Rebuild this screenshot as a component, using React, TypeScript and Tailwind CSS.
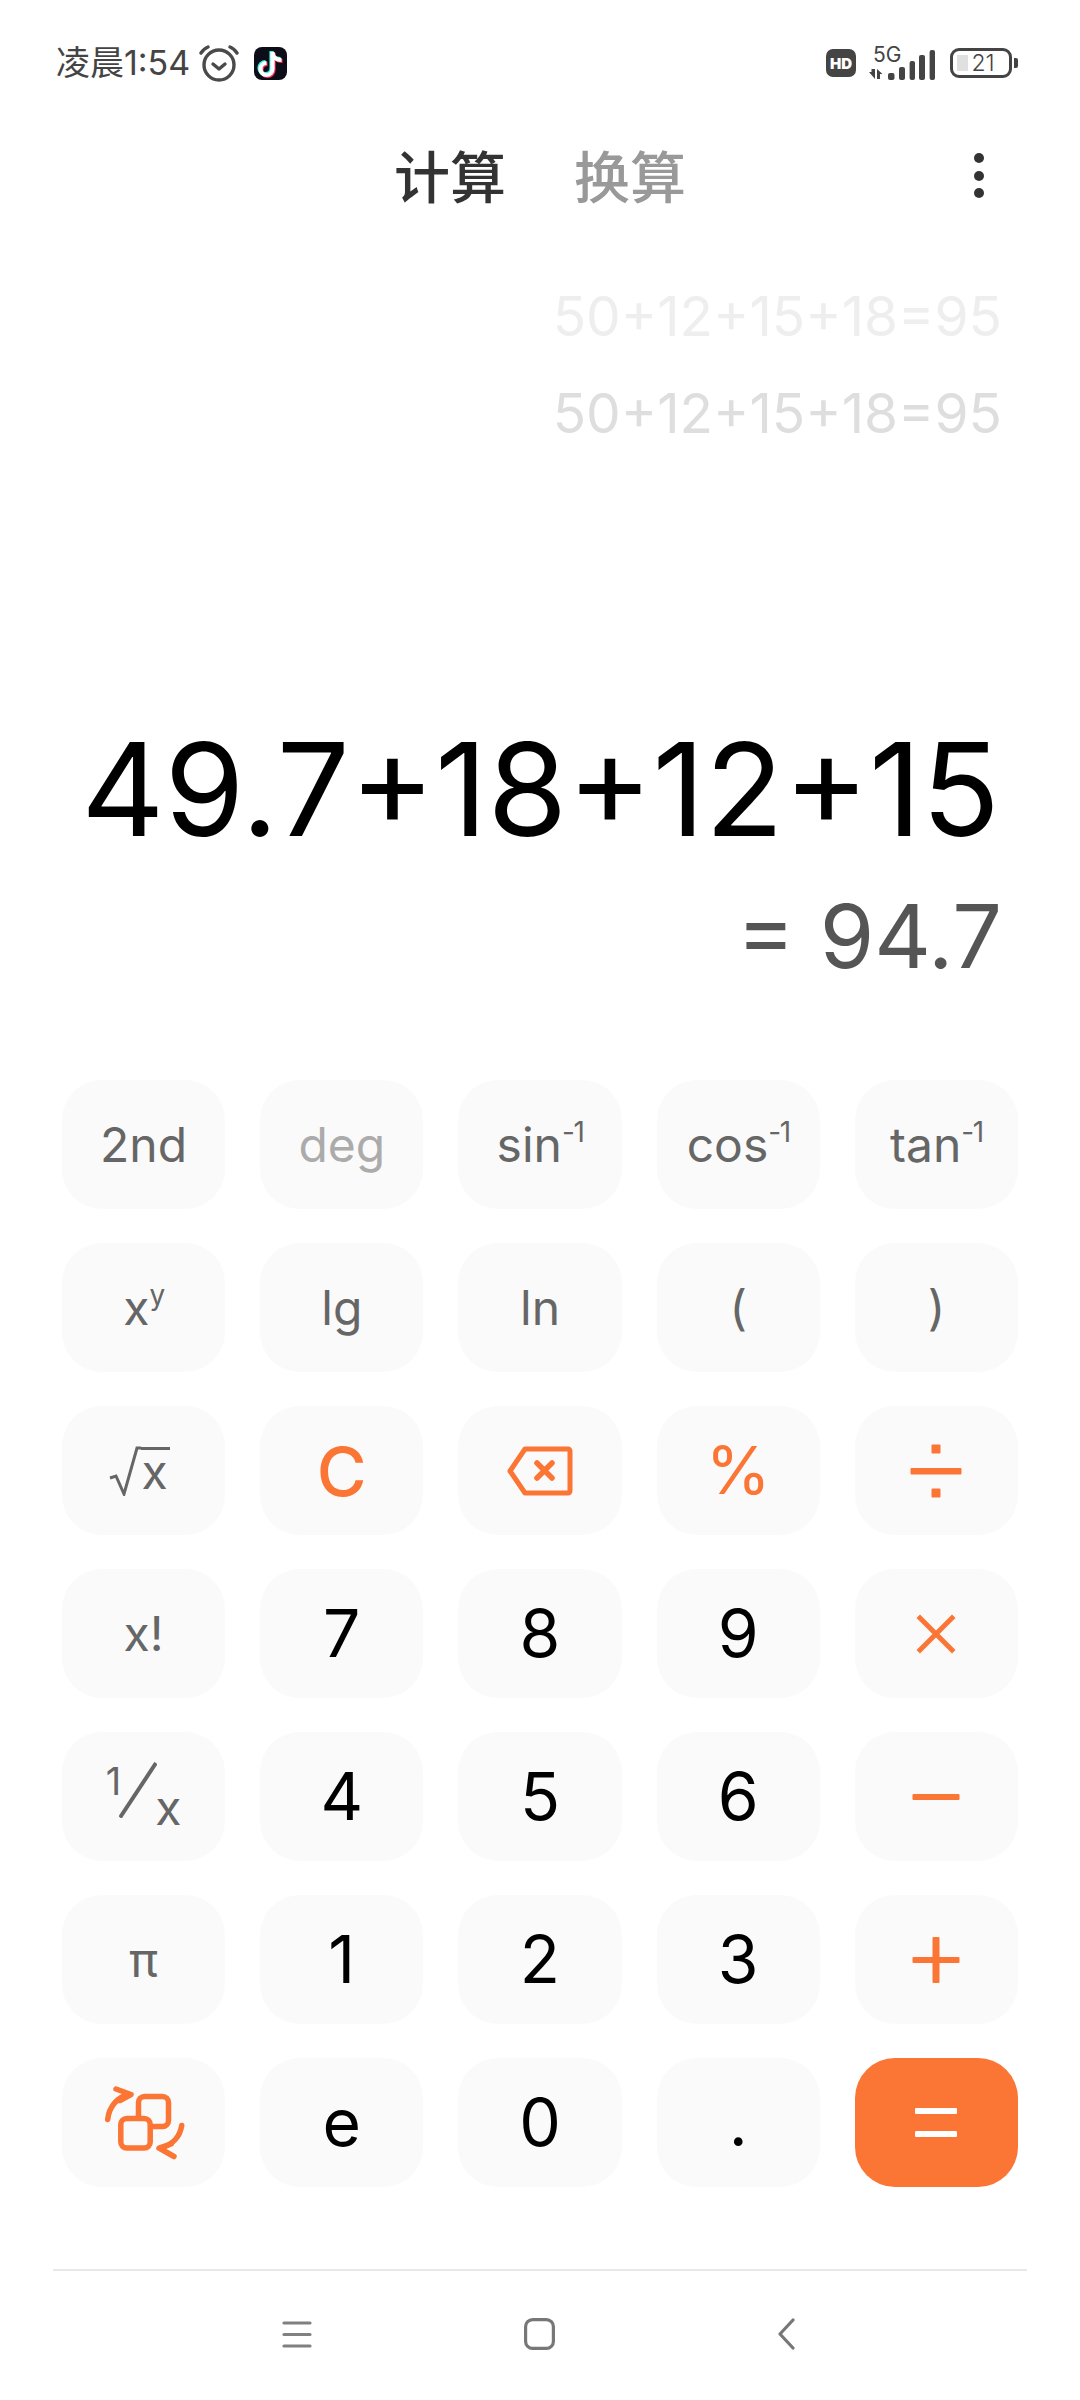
import { ReactNode } from "react";

const orange = "#fb7535";

function Sup({ base, sup }: { base: string; sup: string }) {
  return (
    <span className="flex items-baseline">
      <span>{base}</span>
      <span className="text-[28px] leading-none tracking-tighter -translate-y-[20px]">{sup}</span>
    </span>
  );
}

function Op({ children }: { children: ReactNode }) {
  return (
    <svg width="64" height="64" viewBox="0 0 64 64" fill={orange}>
      {children}
    </svg>
  );
}

function RotateIcon() {
  return (
    <svg width="84" height="84" viewBox="0 0 84 84" fill="none" stroke={orange} strokeWidth="5.5" strokeLinecap="round" strokeLinejoin="round">
      <rect x="36.5" y="15.5" width="30" height="30" rx="6" />
      <rect x="18.8" y="37.5" width="29.4" height="29.5" rx="6" fill="#fafafa" />
      <path d="M5.7 38.5C7 26 15 16 27 13.5" />
      <path d="M14 8l15 5.5-11 6" />
      <path d="M79.7 44.5C78 56 70 64 59 67" />
      <path d="M72 75.5L57 67l12-4" />
    </svg>
  );
}

function Backspace() {
  return (
    <svg width="66" height="50" viewBox="0 0 66 50" fill="none" stroke={orange} strokeWidth="5" strokeLinejoin="round" strokeLinecap="round">
      <path d="M18 3h43a2 2 0 0 1 2 2v40a2 2 0 0 1-2 2H18L3 25z" />
      <path d="M30 17l15 15M45 17L30 32" strokeWidth="5.5" />
    </svg>
  );
}

type Key = { label: ReactNode; kind?: "fn" | "num" | "op" | "dim" | "eq" };

const keys: Key[] = [
  { label: "2nd" },
  { label: "deg", kind: "dim" },
  { label: <Sup base="sin" sup="-1" /> },
  { label: <Sup base="cos" sup="-1" /> },
  { label: <Sup base="tan" sup="-1" /> },
  { label: <Sup base="x" sup="y" /> },
  { label: "lg" },
  { label: "ln" },
  { label: "(" },
  { label: ")" },
  {
    label: (
      <span className="flex items-center pr-[8px]">
        <svg width="32" height="50" viewBox="0 0 32 50" fill="none" stroke="#666" strokeWidth="3">
          <path d="M1 32l6-2 8 18L28 2h4" />
        </svg>
        <span className="border-t-[3px] border-[#666] leading-[44px] pr-0.5">x</span>
      </span>
    ),
  },
  { label: <span className="text-[68px] font-medium">C</span>, kind: "op" },
  { label: <Backspace />, kind: "op" },
  { label: <span className="text-[66px]">%</span>, kind: "op" },
  {
    label: (
      <Op>
        <rect x="6.5" y="29" width="51" height="6.5" rx="1" />
        <rect x="27.5" y="5.5" width="9" height="9" rx="1" />
        <rect x="27.5" y="49.5" width="9" height="9" rx="1" />
      </Op>
    ),
    kind: "op",
  },
  { label: "x!" },
  { label: "7", kind: "num" },
  { label: "8", kind: "num" },
  { label: "9", kind: "num" },
  {
    label: (
      <Op>
        <path d="M16 12.500l16 16 16-16 3.500 3.500-16 16 16 16-3.500 3.500-16-16-16 16-3.500-3.500 16-16-16-16z" />
      </Op>
    ),
    kind: "op",
  },
  {
    label: (
      <span className="flex items-start">
        <span className="text-[38px] leading-none">1</span>
        <svg width="38" height="56" viewBox="0 0 38 56" fill="none" stroke="#666" strokeWidth="4" className="-ml-[2px]">
          <path d="M1 55.500L37 1" />
        </svg>
        <span className="text-[48px] leading-none -ml-[2px] mt-[22px]">x</span>
      </span>
    ),
  },
  { label: "4", kind: "num" },
  { label: "5", kind: "num" },
  { label: "6", kind: "num" },
  {
    label: (
      <Op>
        <rect x="8.500" y="29" width="47" height="6" rx="1" />
      </Op>
    ),
    kind: "op",
  },
  { label: "π" },
  { label: "1", kind: "num" },
  { label: "2", kind: "num" },
  { label: "3", kind: "num" },
  {
    label: (
      <Op>
        <rect x="8.500" y="29" width="47" height="6" rx="1" />
        <rect x="28.500" y="9" width="7" height="46" rx="1" />
      </Op>
    ),
    kind: "op",
  },
  { label: <RotateIcon />, kind: "op" },
  { label: "e", kind: "num" },
  { label: "0", kind: "num" },
  { label: ".", kind: "num" },
  {
    label: (
      <svg width="42" height="30" viewBox="0 0 42 30" fill="#fff">
        <rect y="0" width="42" height="6" rx="1" />
        <rect y="23" width="42" height="6" rx="1" />
      </svg>
    ),
    kind: "eq",
  },
];

function keyClass(kind: Key["kind"]) {
  switch (kind) {
    case "num":
      return "bg-[#fafafa] text-black text-[66px]";
    case "op":
      return "bg-[#fafafa] text-[#fb7535]";
    case "dim":
      return "bg-[#fafafa] text-[#ababab] text-[48px]";
    case "eq":
      return "bg-[#fb7535]";
    default:
      return "bg-[#fafafa] text-[#666666] text-[48px]";
  }
}

function StatusBar() {
  return (
    <div className="h-[124px] pt-[2px] flex items-center justify-between pl-[56px] pr-[62px] text-[#444]">
      <div className="flex items-center">
        <span className="text-[34px] leading-none">凌晨1:54</span>
        <svg width="40" height="38" viewBox="0 0 40 38" fill="none" stroke="#4a4a4a" strokeWidth="3.400" strokeLinecap="round" strokeLinejoin="round" className="ml-[9px]">
          <circle cx="20" cy="21" r="15" />
          <path d="M14 20l6 5 6-5" />
          <path d="M2 9c2-3 4-5 7-6M38 9c-2-3-4-5-7-6" />
        </svg>
        <svg width="33" height="33" viewBox="0 0 33 33" className="ml-[15px]">
          <rect width="33" height="33" rx="8" fill="#0c0d17" />
          <g fill="none" strokeWidth="4.200">
            <path d="M18.500 5v17a6 6 0 1 1-6-6M18.500 5c0 5 4 8 9 8" stroke="#fe2c55" transform="translate(1 1)" />
            <path d="M18.500 5v17a6 6 0 1 1-6-6M18.500 5c0 5 4 8 9 8" stroke="#25f4ee" transform="translate(-1 -1)" />
            <path d="M18.500 5v17a6 6 0 1 1-6-6M18.500 5c0 5 4 8 9 8" stroke="#fff" />
          </g>
        </svg>
      </div>
      <div className="flex items-center">
        <span className="w-[30px] h-[28px] rounded-[7px] bg-[#444] text-white text-[15px] font-black flex items-center justify-center leading-none">
          HD
        </span>
        <div className="relative w-[66px] h-[34px] ml-[13px] -mt-[1px]">
          <span className="absolute left-[4px] -top-[2px] text-[21px] leading-none">5G</span>
          <svg width="66" height="34" viewBox="0 0 66 34" fill="#444" className="absolute inset-0">
            <path d="M0 26h2.500v-3H6v10zM8 33V23l5.500 5H11v5z" />
            <rect x="19" y="27" width="6.500" height="7" rx="2" />
            <rect x="30" y="21" width="6" height="13" rx="2" />
            <rect x="40.600" y="15" width="5.400" height="19" rx="2" />
            <rect x="50" y="9" width="6" height="25" rx="2" />
            <rect x="60.600" y="4" width="5.400" height="30" rx="2" />
          </svg>
        </div>
        <div className="flex items-center ml-[15px]">
          <div className="relative w-[62px] h-[30px] rounded-[9px] border-[3px] border-[#444] text-[23px] font-light leading-none flex items-center justify-center">
            <span className="absolute left-[4px] top-[4px] bottom-[4px] w-[11px] bg-[#e0e0e0]" />
            <span className="relative ml-[4px]">21</span>
          </div>
          <span className="w-[4px] h-[10px] bg-[#444] rounded-r-[2px] ml-[2px]" />
        </div>
      </div>
    </div>
  );
}

export default function App() {
  return (
    <div className="w-[1080px] h-[2400px] bg-white flex flex-col overflow-hidden font-['Inter','Noto_Sans_CJK_SC',sans-serif]">
      <StatusBar />

      <div className="relative h-[106px] pb-[6px] flex items-center justify-center gap-[68px] font-['Noto_Sans_CJK_SC',sans-serif] text-[56px] leading-none">
        <span className="text-[#333] font-medium">计算</span>
        <span className="text-[#999] font-medium">换算</span>
        <div className="absolute right-[96px] top-[29px] flex flex-col gap-[7.5px]">
          <span className="w-[10px] h-[10px] rounded-full bg-[#333]" />
          <span className="w-[10px] h-[10px] rounded-full bg-[#333]" />
          <span className="w-[10px] h-[10px] rounded-full bg-[#333]" />
        </div>
      </div>

      <div className="pt-[38px] pr-[78px] text-right text-[55px] leading-[97px]">
        <div className="text-[#eeeeee]">50+12+15+18=95</div>
        <div className="text-[#dedede]">50+12+15+18=95</div>
      </div>

      <div className="mt-[252px] pr-[80px] text-right text-[129px] leading-[150px] text-black">49.7+18+12+15</div>
      <div className="mt-[12px] pr-[78px] text-right text-[88px] leading-[120px] text-[#555]">= 94.7</div>

      <div className="mt-[84px] px-[62px] grid grid-cols-5 auto-rows-[129px] gap-x-[35px] gap-y-[34px]">
        {keys.map((k, i) => (
          <div key={i} className={`rounded-[40px] flex items-center justify-center ${keyClass(k.kind)}`}>
            {k.label}
          </div>
        ))}
      </div>

      <div className="mt-[82px] mx-[53px] border-t-[2px] border-[#e8e8e8] flex-1">
        <div className="flex items-center pt-[47px] pl-[229px]">
          <svg width="30" height="27" viewBox="0 0 30 27" stroke="#808080" strokeWidth="3.200" strokeLinecap="round">
            <path d="M2 2h26M2 13.500h26M2 25h26" />
          </svg>
          <svg width="31" height="32" viewBox="0 0 31 32" fill="none" stroke="#777" strokeWidth="3.200" className="ml-[212px]">
            <rect x="1.600" y="1.600" width="27.800" height="28.800" rx="7" />
          </svg>
          <svg width="17" height="32" viewBox="0 0 17 32" fill="none" stroke="#777" strokeWidth="3.200" strokeLinecap="round" strokeLinejoin="round" className="ml-[223px]">
            <path d="M15 2L2 16l13 14" />
          </svg>
        </div>
      </div>
    </div>
  );
}
